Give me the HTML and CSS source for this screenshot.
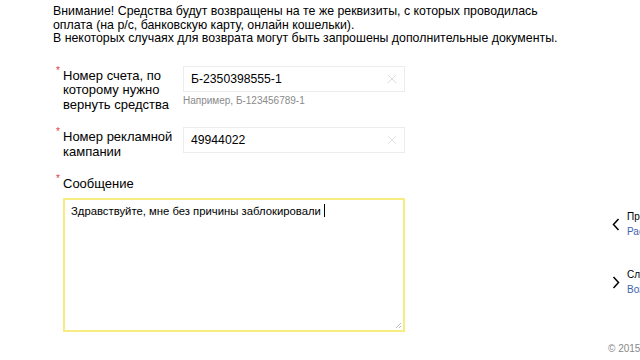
FILE: index.html
```html
<!DOCTYPE html>
<html lang="ru">
<head>
    <meta charset="UTF-8">
    <title>Возврат средств</title>
    <link rel="stylesheet" href="styles.css">
</head>
<body>
    <div class="page">
        <div class="main">
            <p class="notice">
                Внимание! Средства будут возвращены на те же реквизиты, с которых проводилась<br>
                оплата (на р/с, банковскую карту, онлайн кошельки).<br>
                В некоторых случаях для возврата могут быть запрошены дополнительные документы.
            </p>

            <div class="row">
                <label class="label"><span class="req">*</span>Номер счета, по которому нужно вернуть средства</label>
                <div class="field">
                    <div class="input">
                        <span>Б-2350398555-1</span>
                        <svg class="clear" width="12" height="12" viewBox="0 0 12 12"><path d="M1 1L11 11M11 1L1 11" stroke="#d6d6d6" stroke-width="1"/></svg>
                    </div>
                    <div class="hint">Например, Б-123456789-1</div>
                </div>
            </div>

            <div class="row row-second">
                <label class="label"><span class="req">*</span>Номер рекламной кампании</label>
                <div class="field">
                    <div class="input">
                        <span>49944022</span>
                        <svg class="clear" width="12" height="12" viewBox="0 0 12 12"><path d="M1 1L11 11M11 1L1 11" stroke="#e0e0e0" stroke-width="1"/></svg>
                    </div>
                </div>
            </div>

            <div class="message">
                <label class="label"><span class="req">*</span>Сообщение</label>
                <div class="textarea">
                    <span>Здравствуйте, мне без причины заблокировали</span><span class="caret"></span>
                    <svg class="grip" width="7" height="7" viewBox="0 0 7 7"><path d="M6 1L1 6M6 4L4 6" stroke="#aaa" stroke-width="0.8"/></svg>
                </div>
            </div>
        </div>

        <div class="aside">
            <div class="nav-link">
                <svg class="arrow" width="8" height="13" viewBox="0 0 8 13"><path d="M6.5 1L1.5 6.5L6.5 12" fill="none" stroke="#000" stroke-width="1.5"/></svg>
                <div class="nav-text">
                    <div class="nav-title">Предыдущая</div>
                    <a href="#" class="nav-name">Расчеты</a>
                </div>
            </div>
            <div class="nav-link">
                <svg class="arrow" width="8" height="13" viewBox="0 0 8 13"><path d="M1.5 1L6.5 6.5L1.5 12" fill="none" stroke="#000" stroke-width="1.5"/></svg>
                <div class="nav-text">
                    <div class="nav-title">Следующая</div>
                    <a href="#" class="nav-name">Возврат</a>
                </div>
            </div>
            <div class="copy">© 2015</div>
        </div>
    </div>
</body>
</html>
```

FILE: styles.css
```css
body {
    margin: 0;
    padding: 0;
    background: #fff;
    font-family: "Liberation Sans", Arial, sans-serif;
    color: #000;
    overflow: hidden;
}

.page {
    display: flex;
    width: 640px;
    height: 360px;
    overflow: hidden;
}

.main {
    width: 555px;
    padding-left: 53px;
    flex-shrink: 0;
}

.notice {
    margin: 5px 0 0 0;
    font-size: 12.35px;
    line-height: 13.5px;
    white-space: nowrap;
}

.row {
    display: flex;
    margin-top: 20px;
}

.row-second {
    margin-top: 15px;
}

.label {
    position: relative;
    display: block;
    width: 110px;
    padding-left: 10px;
    margin-right: 10px;
    font-size: 13px;
    line-height: 14.5px;
    padding-top: 3px;
}

.req {
    position: absolute;
    left: 3px;
    top: 0;
    color: #e0403f;
    font-size: 10px;
    line-height: 10px;
}

.field {
    width: 222px;
}

.input {
    display: flex;
    align-items: center;
    justify-content: space-between;
    height: 24px;
    border: 1px solid #ececec;
    padding: 0 7px 0 7px;
    font-size: 12.2px;
}

.clear {
    width: 10px;
    height: 10px;
}

.hint {
    margin-top: 3px;
    font-size: 10px;
    color: #8a8a8a;
}

.message {
    margin-top: 15px;
}

.message .label {
    width: auto;
}

.textarea {
    position: relative;
    margin: 6px 0 0 10px;
    width: 326px;
    height: 122px;
    border: 2px solid #f7ec80;
    padding: 4px 6px;
    font-size: 11.3px;
    line-height: 14px;
}

.caret {
    display: inline-block;
    width: 1px;
    height: 13px;
    margin-left: 3px;
    background: #000;
    vertical-align: top;
}

.grip {
    position: absolute;
    right: 1px;
    bottom: 1px;
}

.aside {
    display: flex;
    flex-direction: column;
    padding-top: 209px;
    padding-left: 4px;
    flex-shrink: 0;
}

.nav-link {
    display: flex;
    align-items: center;
    margin-bottom: 28px;
    white-space: nowrap;
}

.arrow {
    margin-right: 7px;
}

.nav-text {
    font-size: 10px;
    line-height: 15px;
}

.nav-name {
    color: #3a64b0;
    text-decoration: none;
}

.copy {
    margin-left: -4px;
    margin-top: 18px;
    font-size: 10px;
    color: #888;
    white-space: nowrap;
}
```
